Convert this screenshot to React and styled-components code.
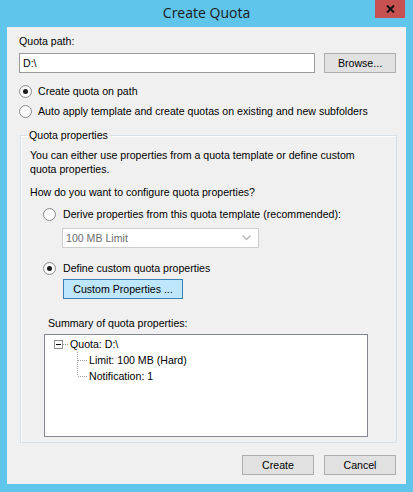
import React from 'react';
import styled, { createGlobalStyle } from 'styled-components';

const GlobalStyle = createGlobalStyle`
  body {
    margin: 0;
    font-family: "Liberation Sans", Arial, sans-serif;
    font-size: 10.6px;
    color: #000;
  }
`;

const Window = styled.div`
  width: 413px;
  height: 492px;
  background: #60c5ea;
  display: flex;
  flex-direction: column;
`;

const TitleBar = styled.div`
  height: 27px;
  display: grid;
  grid-template-columns: 1fr auto 1fr;
  align-items: start;
`;

const Title = styled.div`
  grid-column: 2;
  padding-top: 4px;
  font-family: "Open Sans", "Liberation Sans", sans-serif;
  font-size: 14px;
  line-height: 18px;
  color: #1a1a1a;
`;

const CloseButton = styled.div`
  justify-self: end;
  margin-right: 8px;
  width: 30px;
  height: 18px;
  background: #c75050;
  display: flex;
  align-items: center;
  justify-content: center;
`;

const Client = styled.div`
  flex: 1;
  margin: 0 7px 8px 7px;
  background: #f0f0f0;
  padding: 7px 10px 0 12px;
  display: flex;
  flex-direction: column;
`;

const Label = styled.div`
  line-height: 14px;
  margin-top: ${(p) => p.$top || 0}px;
  margin-left: ${(p) => p.$left || 0}px;
`;

const PathRow = styled.div`
  display: flex;
  gap: 9px;
  margin-top: 5px;
`;

const TextBox = styled.div`
  flex: 1;
  height: 20px;
  box-sizing: border-box;
  border: 1px solid #9a9a9a;
  background: #fff;
  padding-left: 3px;
  display: flex;
  align-items: center;
`;

const Button = styled.button`
  width: ${(p) => p.$width || 72}px;
  height: 20px;
  box-sizing: border-box;
  padding: 0;
  margin: ${(p) => p.$margin || 0};
  font: inherit;
  color: #000;
  background: ${(p) => (p.$focused ? '#bee6fd' : '#e1e1e1')};
  border: 1px solid ${(p) => (p.$focused ? '#3c7fb1' : '#adadad')};
`;

const RadioRow = styled.div`
  display: flex;
  align-items: center;
  height: 20px;
  gap: ${(p) => p.$gap || 6}px;
  margin-top: ${(p) => p.$top || 0}px;
  margin-left: ${(p) => p.$left || 0}px;
`;

const RadioCircle = styled.span`
  width: 13px;
  height: 13px;
  box-sizing: border-box;
  border-radius: 50%;
  border: 1px solid #8c8c8c;
  background: linear-gradient(#f4f4f4, #ffffff);
  display: flex;
  align-items: center;
  justify-content: center;
  &::after {
    content: '';
    width: 5px;
    height: 5px;
    border-radius: 50%;
    background: ${(p) => (p.$checked ? '#1b1b1b' : 'transparent')};
  }
`;

const GroupBox = styled.fieldset`
  margin: 7px -1px 0 1px;
  padding: 0 0 5px 9px;
  border: 1px solid #d5dfe5;
  box-shadow: inset 1px 1px 0 #fff;
  min-width: 0;
`;

const Legend = styled.legend`
  padding: 0 2px;
  margin-left: -3px;
  line-height: 14px;
`;

const Desc = styled.div`
  line-height: 14px;
  margin-top: 6px;
  padding-right: 20px;
`;

const Select = styled.div`
  width: 197px;
  height: 20px;
  box-sizing: border-box;
  margin: 4px 0 0 32px;
  border: 1px solid #cdcdcd;
  background: #fff;
  color: #6d6d6d;
  padding: 0 7px 0 3px;
  display: flex;
  align-items: center;
  justify-content: space-between;
`;

const Tree = styled.div`
  width: 324px;
  height: 103px;
  box-sizing: border-box;
  margin: 4px 0 0 14px;
  border: 1px solid #828790;
  background: #fff;
  padding: 1px 0 0 9px;
`;

const TreeRow = styled.div`
  height: 16px;
  display: flex;
  align-items: center;
  padding-left: ${(p) => p.$indent || 0}px;
`;

const Expander = styled.span`
  width: 9px;
  height: 9px;
  box-sizing: border-box;
  border: 1px solid #919191;
  background: #fff;
  display: flex;
  align-items: center;
  justify-content: center;
  &::after {
    content: '';
    width: 5px;
    height: 1px;
    background: #000;
  }
`;

const Footer = styled.div`
  display: flex;
  justify-content: flex-end;
  gap: 10px;
  margin-top: 12px;
`;

function Radio({ checked, children, gap, top, left }) {
  return (
    <RadioRow $gap={gap} $top={top} $left={left}>
      <RadioCircle $checked={checked} />
      <span>{children}</span>
    </RadioRow>
  );
}

function Connector({ width, last, root }) {
  return (
    <svg width={width} height="16" style={{ flex: 'none' }}>
      {!root && (
        <line x1="0.5" y1="0" x2="0.5" y2={last ? 8 : 16} stroke="#a0a0a0" strokeDasharray="1 1" />
      )}
      <line x1={root ? 0 : 1} y1="8.5" x2={width} y2="8.5" stroke="#a0a0a0" strokeDasharray="1 1" />
    </svg>
  );
}

export default function App() {
  return (
    <>
      <GlobalStyle />
      <Window>
        <TitleBar>
          <Title>Create Quota</Title>
          <CloseButton>
            <svg width="9" height="8" viewBox="0 0 9 8">
              <path d="M1 0.5 L8 7.5 M8 0.5 L1 7.5" stroke="#111" strokeWidth="2" />
            </svg>
          </CloseButton>
        </TitleBar>
        <Client>
          <Label>Quota path:</Label>
          <PathRow>
            <TextBox>D:\</TextBox>
            <Button>Browse...</Button>
          </PathRow>
          <Radio checked top={8}>Create quota on path</Radio>
          <Radio>Auto apply template and create quotas on existing and new subfolders</Radio>

          <GroupBox>
            <Legend>Quota properties</Legend>
            <Desc>You can either use properties from a quota template or define custom quota properties.</Desc>
            <Label $top={9}>How do you want to configure quota properties?</Label>
            <Radio top={5} left={13} gap={7}>Derive properties from this quota template (recommended):</Radio>
            <Select>
              <span>100 MB Limit</span>
              <svg width="9" height="6" viewBox="0 0 9 6">
                <polyline points="0.5,0.5 4.5,4.5 8.5,0.5" fill="none" stroke="#b5b5b5" strokeWidth="1.4" />
              </svg>
            </Select>
            <Radio checked top={10} left={13} gap={7}>Define custom quota properties</Radio>
            <Button $focused $width={120} $margin="1px 0 0 33px">Custom Properties ...</Button>
            <Label $top={17} $left={18}>Summary of quota properties:</Label>
            <Tree>
              <TreeRow>
                <Expander />
                <Connector width={6} root />
                <span style={{ marginLeft: 1 }}>Quota: D:\</span>
              </TreeRow>
              <TreeRow $indent={23}>
                <Connector width={11} />
                <span style={{ marginLeft: 1 }}>Limit: 100 MB (Hard)</span>
              </TreeRow>
              <TreeRow $indent={23}>
                <Connector width={11} last />
                <span style={{ marginLeft: 1 }}>Notification: 1</span>
              </TreeRow>
            </Tree>
          </GroupBox>

          <Footer>
            <Button>Create</Button>
            <Button>Cancel</Button>
          </Footer>
        </Client>
      </Window>
    </>
  );
}
